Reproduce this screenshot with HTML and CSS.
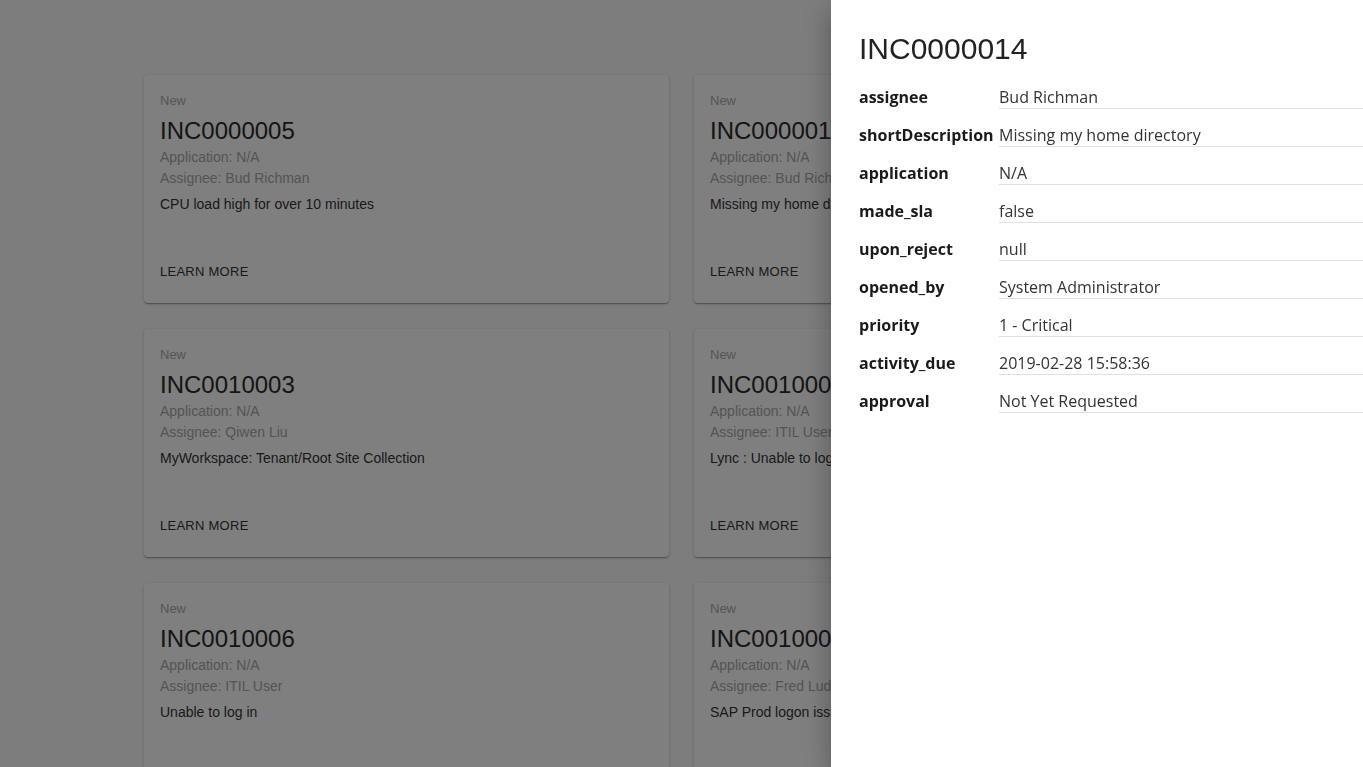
FILE: index.html
```html
<!DOCTYPE html>
<html lang="en">
<head>
    <meta charset="UTF-8">
    <meta name="viewport" content="width=device-width, initial-scale=1.0">
    <title>Incidents</title>
    <link rel="stylesheet" href="styles.css">
</head>
<body>
    <div class="main">
        <div class="grid">
            <div class="card">
                <div class="card-content">
                    <div class="state">New</div>
                    <div class="number">INC0000005</div>
                    <div class="meta">Application: N/A</div>
                    <div class="meta">Assignee: Bud Richman</div>
                    <div class="desc">CPU load high for over 10 minutes</div>
                </div>
                <div class="card-actions"><button class="learn">Learn More</button></div>
            </div>
            <div class="card">
                <div class="card-content">
                    <div class="state">New</div>
                    <div class="number">INC0000014</div>
                    <div class="meta">Application: N/A</div>
                    <div class="meta">Assignee: Bud Richman</div>
                    <div class="desc">Missing my home directory</div>
                </div>
                <div class="card-actions"><button class="learn">Learn More</button></div>
            </div>
            <div class="card">
                <div class="card-content">
                    <div class="state">New</div>
                    <div class="number">INC0010003</div>
                    <div class="meta">Application: N/A</div>
                    <div class="meta">Assignee: Qiwen Liu</div>
                    <div class="desc">MyWorkspace: Tenant/Root Site Collection</div>
                </div>
                <div class="card-actions"><button class="learn">Learn More</button></div>
            </div>
            <div class="card">
                <div class="card-content">
                    <div class="state">New</div>
                    <div class="number">INC0010004</div>
                    <div class="meta">Application: N/A</div>
                    <div class="meta">Assignee: ITIL User</div>
                    <div class="desc">Lync : Unable to log in</div>
                </div>
                <div class="card-actions"><button class="learn">Learn More</button></div>
            </div>
            <div class="card">
                <div class="card-content">
                    <div class="state">New</div>
                    <div class="number">INC0010006</div>
                    <div class="meta">Application: N/A</div>
                    <div class="meta">Assignee: ITIL User</div>
                    <div class="desc">Unable to log in</div>
                </div>
                <div class="card-actions"><button class="learn">Learn More</button></div>
            </div>
            <div class="card">
                <div class="card-content">
                    <div class="state">New</div>
                    <div class="number">INC0010007</div>
                    <div class="meta">Application: N/A</div>
                    <div class="meta">Assignee: Fred Luddy</div>
                    <div class="desc">SAP Prod logon issue</div>
                </div>
                <div class="card-actions"><button class="learn">Learn More</button></div>
            </div>
        </div>
    </div>

    <div class="backdrop"></div>

    <div class="drawer">
        <h2 class="drawer-title">INC0000014</h2>
        <div class="field">
            <div class="field-name">assignee</div>
            <div class="field-value">Bud Richman</div>
        </div>
        <div class="field">
            <div class="field-name">shortDescription</div>
            <div class="field-value">Missing my home directory</div>
        </div>
        <div class="field">
            <div class="field-name">application</div>
            <div class="field-value">N/A</div>
        </div>
        <div class="field">
            <div class="field-name">made_sla</div>
            <div class="field-value">false</div>
        </div>
        <div class="field">
            <div class="field-name">upon_reject</div>
            <div class="field-value">null</div>
        </div>
        <div class="field">
            <div class="field-name">opened_by</div>
            <div class="field-value">System Administrator</div>
        </div>
        <div class="field">
            <div class="field-name">priority</div>
            <div class="field-value">1 - Critical</div>
        </div>
        <div class="field">
            <div class="field-name">activity_due</div>
            <div class="field-value">2019-02-28 15:58:36</div>
        </div>
        <div class="field">
            <div class="field-name">approval</div>
            <div class="field-value">Not Yet Requested</div>
        </div>
    </div>
</body>
</html>
```

FILE: styles.css
```css
html, body {
    height: 100%;
    overflow: hidden;
}
body {
    margin: 0;
    padding: 0;
    background-color: #fafafa;
    font-family: "Liberation Sans", Arial, sans-serif;
    color: #222;
}
.main {
    padding-top: 75px;
}
.grid {
    width: 1075px;
    margin: 0 auto;
    display: grid;
    grid-template-columns: 1fr 1fr;
    column-gap: 25px;
    row-gap: 26px;
}
.card {
    height: 228px;
    display: flex;
    flex-direction: column;
    background-color: #fff;
    border-radius: 4px;
    box-shadow: 0 1px 3px 0 rgba(0, 0, 0, 0.2), 0 1px 1px 0 rgba(0, 0, 0, 0.14), 0 2px 1px -1px rgba(0, 0, 0, 0.12);
}
.card-content {
    padding: 16px 16px 0;
}
.state {
    font-size: 13px;
    line-height: 20px;
    color: #aaa;
}
.number {
    margin-top: 4px;
    font-family: "Liberation Sans Narrow", "Arial Narrow", "Liberation Sans", sans-serif;
    font-stretch: condensed;
    font-size: 24px;
    line-height: 32px;
    color: #2a2a2a;
}
.meta {
    font-size: 14px;
    line-height: 21px;
    color: #a8a8a8;
}
.desc {
    margin-top: 5px;
    font-size: 14px;
    line-height: 21px;
    color: #333;
}
.card-actions {
    margin-top: auto;
    padding: 8px 8px 13px;
}
.learn {
    background: none;
    border: none;
    padding: 6px 8px;
    font-family: "Liberation Sans", Arial, sans-serif;
    font-size: 13px;
    line-height: 24px;
    letter-spacing: 0.02em;
    text-transform: uppercase;
    color: #333;
    cursor: pointer;
}
.backdrop {
    position: fixed;
    top: 0;
    left: 0;
    right: 0;
    bottom: 0;
    background-color: rgba(0, 0, 0, 0.5);
}
.drawer {
    position: fixed;
    top: 0;
    right: 0;
    bottom: 0;
    width: 532px;
    box-sizing: border-box;
    padding: 31px 0 0 28px;
    background-color: #fff;
    box-shadow: 0 8px 10px -5px rgba(0, 0, 0, 0.2), 0 16px 24px 2px rgba(0, 0, 0, 0.14), 0 6px 30px 5px rgba(0, 0, 0, 0.12);
}
.drawer-title {
    margin: 0 0 19px;
    font-family: "Liberation Sans Narrow", "Arial Narrow", "Liberation Sans", sans-serif;
    font-stretch: condensed;
    font-size: 30px;
    font-weight: normal;
    line-height: 36px;
    color: #222;
}
.field {
    display: flex;
    align-items: baseline;
    margin-bottom: 15px;
    font-family: "Open Sans", sans-serif;
    font-size: 16px;
    line-height: 22px;
}
.field-name {
    width: 140px;
    flex-shrink: 0;
    font-weight: bold;
    color: #1a1a1a;
}
.field-value {
    flex: 1;
    padding-top: 1px;
    line-height: 21px;
    border-bottom: 1px solid #e0e0e0;
    color: #333;
}
```
